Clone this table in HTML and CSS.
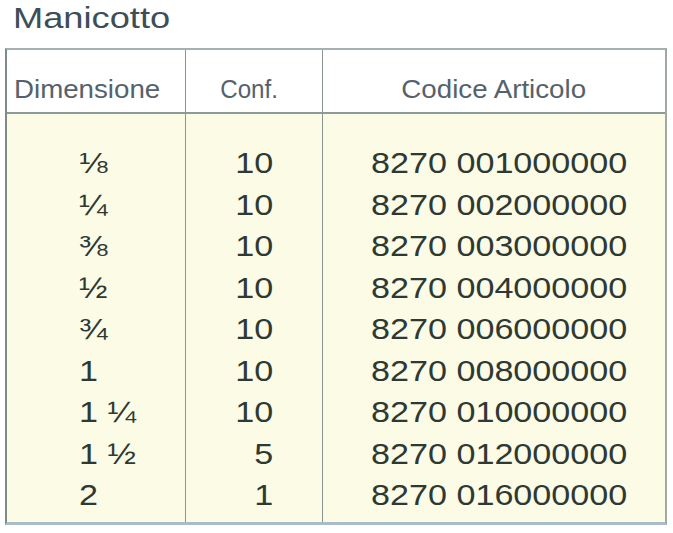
FILE: index.html
```html
<!DOCTYPE html>
<html lang="it">
<head>
<meta charset="utf-8">
<title>Manicotto</title>
<link rel="stylesheet" href="styles.css">
</head>
<body>
<h1 class="title"><span class="wide">Manicotto</span></h1>
<table class="grid">
  <colgroup>
    <col class="col-dim">
    <col class="col-conf">
    <col class="col-code">
  </colgroup>
  <thead>
    <tr>
      <th class="h-dim"><span class="wide">Dimensione</span></th>
      <th class="h-conf"><span class="wide">Conf.</span></th>
      <th class="h-code"><span class="wide">Codice Articolo</span></th>
    </tr>
  </thead>
  <tbody>
    <tr><td class="dim"><span class="wide">⅛</span></td><td class="conf"><span class="wide">10</span></td><td class="code"><span class="wide">8270 001000000</span></td></tr>
    <tr><td class="dim"><span class="wide">¼</span></td><td class="conf"><span class="wide">10</span></td><td class="code"><span class="wide">8270 002000000</span></td></tr>
    <tr><td class="dim"><span class="wide">⅜</span></td><td class="conf"><span class="wide">10</span></td><td class="code"><span class="wide">8270 003000000</span></td></tr>
    <tr><td class="dim"><span class="wide">½</span></td><td class="conf"><span class="wide">10</span></td><td class="code"><span class="wide">8270 004000000</span></td></tr>
    <tr><td class="dim"><span class="wide">¾</span></td><td class="conf"><span class="wide">10</span></td><td class="code"><span class="wide">8270 006000000</span></td></tr>
    <tr><td class="dim"><span class="wide">1</span></td><td class="conf"><span class="wide">10</span></td><td class="code"><span class="wide">8270 008000000</span></td></tr>
    <tr><td class="dim"><span class="wide">1 ¼</span></td><td class="conf"><span class="wide">10</span></td><td class="code"><span class="wide">8270 010000000</span></td></tr>
    <tr><td class="dim"><span class="wide">1 ½</span></td><td class="conf"><span class="wide">5</span></td><td class="code"><span class="wide">8270 012000000</span></td></tr>
    <tr><td class="dim"><span class="wide">2</span></td><td class="conf"><span class="wide">1</span></td><td class="code"><span class="wide">8270 016000000</span></td></tr>
  </tbody>
</table>
</body>
</html>
```

FILE: styles.css
```css
html, body {
  margin: 0;
  padding: 0;
  background: #ffffff;
}

body {
  font-family: "Liberation Sans", Arial, sans-serif;
}

.wide {
  display: inline-block;
  white-space: pre;
}

.title {
  margin: 0;
  padding: 2px 0 0 13px;
  font-size: 29px;
  line-height: 32px;
  font-weight: normal;
  color: #3d4e57;
  height: 48px;
  box-sizing: border-box;
}

.title .wide {
  transform: scaleX(1.25);
  transform-origin: left center;
}

.grid {
  border-collapse: separate;
  border-spacing: 0;
  table-layout: fixed;
  width: 662px;
  margin-left: 5px;
  border-top: 2px solid #a4b0b2;
  border-left: 2px solid #7f8b8b;
  border-right: 2px solid #a0a8a4;
  border-bottom: 3px solid #a9bccb;
}

.col-dim { width: 178px; }
.col-conf { width: 137px; }
.col-code { width: auto; }

.grid th {
  background: #ffffff;
  font-weight: normal;
  font-size: 26px;
  line-height: 26px;
  color: #56626b;
  padding: 26px 0 10px 0;
  border-bottom: 2px solid #8c9a9a;
  white-space: nowrap;
}

.grid th .wide {
  transform: scaleX(1.065);
}

.h-dim {
  text-align: left;
  padding-left: 7px !important;
}

.h-dim .wide {
  transform-origin: left center;
}

.h-conf {
  text-align: center;
  padding-right: 10px !important;
}

.grid .h-conf .wide {
  transform: scaleX(0.93);
  transform-origin: center center;
}

.h-code .wide {
  transform-origin: center center;
}

.h-code {
  text-align: center;
}

.grid th + th,
.grid td + td {
  border-left: 1px solid #8a9490;
}

.grid td {
  background: #fbfbe6;
  font-size: 29px;
  line-height: 41.5px;
  color: #2e3934;
  padding: 0;
  white-space: pre;
}

.grid td .wide {
  transform: scaleX(1.177);
}

.grid tbody tr:first-child td {
  padding-top: 29px;
}

.grid tbody tr:last-child td {
  padding-bottom: 5px;
}

.dim {
  text-align: left;
  padding-left: 72px !important;
}

.dim .wide {
  transform-origin: left center;
}

.conf {
  text-align: right;
  padding-right: 49px !important;
}

.conf .wide {
  transform-origin: right center;
}

.code {
  text-align: left;
  padding-left: 48px !important;
}

.code .wide {
  transform-origin: left center;
}
```
